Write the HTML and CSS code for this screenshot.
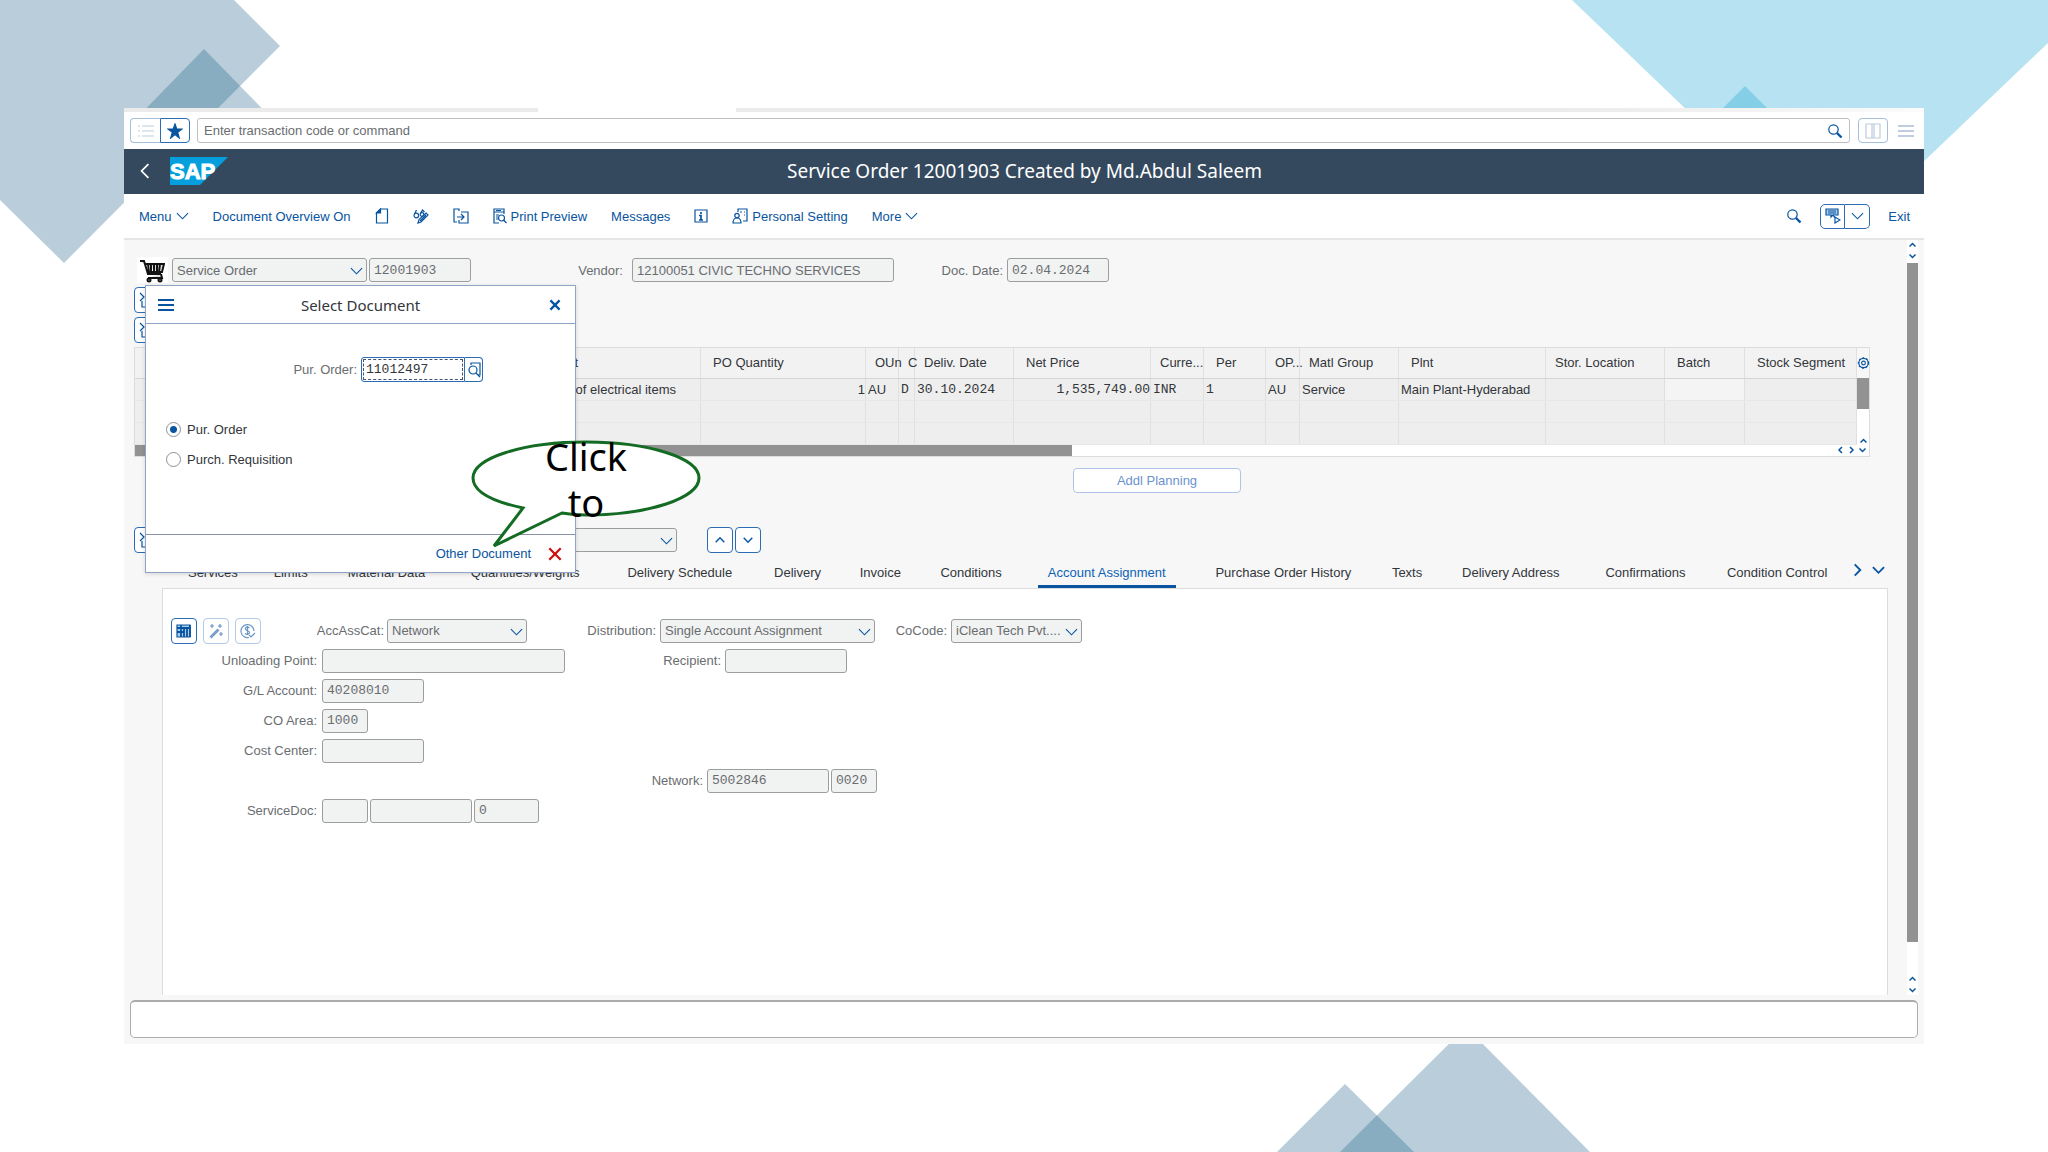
FILE: index.html
```html
<!DOCTYPE html>
<html lang="en">
<head>
  <meta charset="UTF-8">
  <meta name="viewport" content="width=device-width, initial-scale=1.0">
  <title>Service Order 12001903</title>
  <link rel="stylesheet" href="styles.css">
</head>
<body>

  <!-- Shared icons -->
  <svg class="sprite" aria-hidden="true">
    <symbol id="down" viewBox="0 0 14 14"><path d="M1 4l6 6 6-6"/></symbol>
    <symbol id="up" viewBox="0 0 14 14"><path d="M1 10l6-6 6 6"/></symbol>
    <symbol id="left" viewBox="0 0 14 14"><path d="M10 1L4 7l6 6"/></symbol>
    <symbol id="right" viewBox="0 0 14 14"><path d="M4 1l6 6-6 6"/></symbol>
    <symbol id="search" viewBox="0 0 16 16"><circle cx="6.500" cy="6.500" r="4.700"/><path d="M10 10l4.500 4.500" stroke-width="2.400"/></symbol>
    <symbol id="bars" viewBox="0 0 16 14"><path d="M0 2h16M0 7h16M0 12h16"/></symbol>
    <symbol id="cross" viewBox="0 0 14 14"><path d="M3 3l8 8M11 3l-8 8"/></symbol>
    <symbol id="cancel" viewBox="0 0 14 14"><path d="M2 2l10 10M12 2L2 12"/></symbol>
    <symbol id="detail" viewBox="0 0 16 16"><path d="M1 1l4 4-4 4M3 9v6h11V3H8"/></symbol>
  </svg>

  <!-- Slide decoration -->
  <svg class="deco deco-left" viewBox="0 0 290 270"><path d="M0 0h234l46 46L64 263 0 200z"/><path d="M204 49l76 78H128z"/></svg>
  <svg class="deco deco-right" viewBox="0 0 480 250"><path d="M4 0h476v43L264 249z"/><path d="M177 86l40 40h-80z"/></svg>
  <svg class="deco deco-bottom" viewBox="0 0 320 130"><path d="M196 5l124 125H70z"/><path d="M75 62l69 68H7z"/></svg>

  <div class="window">
    <div class="strip"><span></span><span></span></div>

    <!-- Command bar -->
    <div class="command-bar">
      <div class="toggle">
        <button class="faded" aria-label="List"><svg class="icon" viewBox="0 0 16 14"><path d="M0 2h2M4 2h12M0 7h2M4 7h12M0 12h2M4 12h12"/></svg></button>
        <button class="active" aria-label="Favorites"><svg class="icon solid" viewBox="0 0 16 16"><path d="M8 1l1.700 5H15l-4.300 3.300L12.300 15 8 11.500 3.700 15l1.600-5.700L1 6h5.300z"/></svg></button>
      </div>
      <div class="command">
        <input type="text" placeholder="Enter transaction code or command" aria-label="Transaction code">
        <svg class="icon"><use href="#search"/></svg>
      </div>
      <button class="split-view faded" aria-label="Split view"><svg class="icon" viewBox="0 0 16 16"><path d="M1 1h14v14H1zM7 1v14M9 1v14"/></svg></button>
      <button class="bare burger" aria-label="Menu"><svg class="icon"><use href="#bars"/></svg></button>
    </div>

    <!-- Header -->
    <header class="header">
      <button class="bare back" aria-label="Back"><svg class="icon"><use href="#left"/></svg></button>
      <svg class="logo" viewBox="0 0 58 28"><path d="M0 0h58L30 28H0z"/><text x="0" y="22">SAP</text></svg>
      <h1>Service Order 12001903 Created by Md.Abdul Saleem</h1>
    </header>

    <!-- Toolbar -->
    <nav class="toolbar">
      <button class="bare">Menu <svg class="icon small"><use href="#down"/></svg></button>
      <button class="bare">Document Overview On</button>
      <button class="bare" aria-label="Create"><svg class="icon narrow" viewBox="0 0 13 16"><path d="M5 1h7v14H1V5z"/><path class="fill" d="M5 1v4H1z"/></svg></button>
      <button class="bare" aria-label="Display/Change"><svg class="icon" viewBox="0 0 16 16"><circle cx="3.300" cy="7.500" r="2.300"/><circle cx="9" cy="6.500" r="1.800"/><path d="M1.500 6l2-4M7.500 5.500l2-3.500 2 2M5 15l1-3.500 7-6.500 2 2-7 7zM7 13l6-6"/></svg></button>
      <button class="bare" aria-label="Other Order"><svg class="icon" viewBox="0 0 16 16"><path d="M6 3V1H1v13h3M8 4h7v11H6v-3M4 9h7M8 6l3 3-3 3"/></svg></button>
      <button class="bare"><svg class="icon narrow" viewBox="0 0 14 16"><path d="M6 15H1V1h10v5M1 4h10M3 2.500h5M3 7h3M3 9h2M3 11h2"/><circle cx="8.500" cy="10" r="3"/><path d="M10.500 12l3 3"/></svg>Print Preview</button>
      <button class="bare">Messages</button>
      <button class="bare" aria-label="Info"><svg class="icon narrow" viewBox="0 0 14 14"><path d="M1 1h12v12H1z"/><path d="M7 3v2M5 6.500h2V11M5 11h4" stroke-width="1.700"/></svg></button>
      <button class="bare"><svg class="icon" viewBox="0 0 16 16"><path d="M6 4V1h9v12h-4M8 4h2M12 4h1M12 7h1M1 15c0-3 1-5 4-5s4 2 4 5z"/><circle cx="5" cy="7.500" r="2.200"/></svg>Personal Setting</button>
      <button class="bare">More <svg class="icon small"><use href="#down"/></svg></button>
      <span class="spacer"></span>
      <button class="bare" aria-label="Search"><svg class="icon"><use href="#search"/></svg></button>
      <div class="split-button">
        <button aria-label="Services"><svg class="icon" viewBox="0 0 16 16"><path class="tint" d="M1 1h12v6H8l-2 2V7H1z"/><path d="M3 3h8M3 5h8M8 7l2 3M10 9v6l5-3z"/></svg></button>
        <button aria-label="More services"><svg class="icon small"><use href="#down"/></svg></button>
      </div>
      <button class="bare">Exit</button>
    </nav>

    <div class="body">
      <main class="content">

        <!-- Document header -->
        <div class="doc-row">
          <span class="cart"><svg viewBox="0 0 26 24"><path d="M1 2h4l4 13h13M6 5h19l-2 8H8M9 5l1 8M12 5v8M15 5v8M18 5v8M21 5l-1 8M22 15l1 4H9"/><circle cx="10" cy="21" r="1.500"/><circle cx="21" cy="21" r="1.500"/></svg></span>
          <span class="select w-195"><select aria-label="Document type"><option>Service Order</option></select><svg class="icon small"><use href="#down"/></svg></span>
          <input class="mono w-102" value="12001903" readonly aria-label="Document number">
          <label class="vendor" for="vendor">Vendor:</label>
          <input class="w-262" id="vendor" value="12100051 CIVIC TECHNO SERVICES" readonly>
          <label class="date" for="date">Doc. Date:</label>
          <input class="mono w-102" id="date" value="02.04.2024" readonly>
        </div>
        <div class="side">
          <button class="tool" aria-label="Header"><svg class="icon"><use href="#detail"/></svg></button>
          <button class="tool" aria-label="Item overview"><svg class="icon"><use href="#detail"/></svg></button>
        </div>

        <!-- Items -->
        <div class="items">
          <table>
            <colgroup>
              <col><col class="c-qty"><col class="c-oun"><col class="c-cat"><col class="c-date"><col class="c-price"><col class="c-cur"><col class="c-per"><col class="c-opu"><col class="c-matl"><col class="c-plnt"><col class="c-stor"><col class="c-batch"><col class="c-stock">
            </colgroup>
            <thead>
              <tr><th class="short">Short Text</th><th class="wide">PO Quantity</th><th>OUn</th><th>C</th><th>Deliv. Date</th><th class="wide">Net Price</th><th>Curre...</th><th class="wide">Per</th><th>OP...</th><th>Matl Group</th><th class="wide">Plnt</th><th>Stor. Location</th><th class="wide">Batch</th><th class="wide">Stock Segment</th></tr>
            </thead>
            <tbody>
              <tr><td class="item">Supply of electrical items</td><td class="num">1</td><td>AU</td><td class="mono">D</td><td class="mono">30.10.2024</td><td class="mono num">1,535,749.00</td><td class="mono">INR</td><td class="mono">1</td><td>AU</td><td>Service</td><td>Main Plant-Hyderabad</td><td></td><td class="open"></td><td></td></tr>
              <tr><td></td><td></td><td></td><td></td><td></td><td></td><td></td><td></td><td></td><td></td><td></td><td></td><td></td><td></td></tr>
              <tr><td></td><td></td><td></td><td></td><td></td><td></td><td></td><td></td><td></td><td></td><td></td><td></td><td></td><td></td></tr>
            </tbody>
          </table>
          <div class="items-side">
            <button class="bare gear" aria-label="Settings"><svg class="icon small" viewBox="0 0 14 14"><circle cx="7" cy="7" r="5"/><circle cx="7" cy="7" r="5.500" stroke-dasharray="2 2"/><circle cx="7" cy="7" r="2"/></svg></button>
            <div class="track"><span class="thumb"></span><svg class="icon tiny"><use href="#up"/></svg></div>
          </div>
          <div class="hscroll"><span class="thumb"></span><svg class="icon tiny"><use href="#left"/></svg><svg class="icon tiny"><use href="#right"/></svg></div>
          <div class="corner"><svg class="icon tiny"><use href="#down"/></svg></div>
        </div>

        <div class="planning"><button>Addl Planning</button></div>

        <div class="item-row">
          <button class="tool" aria-label="Item details"><svg class="icon"><use href="#detail"/></svg></button>
          <span class="select item-select"><select aria-label="Item"><option></option></select><svg class="icon small"><use href="#down"/></svg></span>
          <button class="tool" aria-label="Previous item"><svg class="icon step"><use href="#up"/></svg></button>
          <button class="tool" aria-label="Next item"><svg class="icon step"><use href="#down"/></svg></button>
        </div>

        <!-- Tabs -->
        <div class="tabs">
          <button>Services</button>
          <button>Limits</button>
          <button>Material Data</button>
          <button>Quantities/Weights</button>
          <button>Delivery Schedule</button>
          <button>Delivery</button>
          <button>Invoice</button>
          <button>Conditions</button>
          <button class="current">Account Assignment</button>
          <button>Purchase Order History</button>
          <button>Texts</button>
          <button>Delivery Address</button>
          <button>Confirmations</button>
          <button>Condition Control</button>
          <span class="tab-nav"><svg class="icon small"><use href="#right"/></svg><svg class="icon small"><use href="#down"/></svg></span>
        </div>

        <section class="panel">
          <div class="form-row">
            <div class="left">
              <div class="panel-tools">
                <button class="tool" aria-label="Table view"><svg class="icon" viewBox="0 0 16 16"><path class="tint" d="M1 2h13v12H1z"/><path d="M1 5h13M1 9h7M5 2v12M8 5v9M11 5v9M14 2v12" stroke-width="1.800"/></svg></button>
                <button class="tool dim" aria-label="Change distribution"><svg class="icon" viewBox="0 0 16 16"><path d="M2 14l8-8M3 15l8-8M4 1v4M2 3h4M12 1v4M10 3h4M13 9v4M11 11h4"/></svg></button>
                <button class="tool dim" aria-label="Repeat"><svg class="icon" viewBox="0 0 16 16"><path d="M9 14.500A6.500 6.500 0 1 1 14 8M9.500 5C8 3.500 5 4 5.500 6s4 1.500 4 3.500-3 2.500-4.500 1M7.500 3v9M9 12l2 2 4-4"/></svg></button>
              </div>
              <label class="l-cat" for="cat">AccAssCat:</label>
              <span class="select w-140"><select id="cat"><option>Network</option></select><svg class="icon small"><use href="#down"/></svg></span>
            </div>
            <label class="l-dist" for="dist">Distribution:</label>
            <span class="select w-215"><select id="dist"><option>Single Account Assignment</option></select><svg class="icon small"><use href="#down"/></svg></span>
            <label class="l-code" for="code">CoCode:</label>
            <span class="select w-131"><select id="code"><option>iClean Tech Pvt....</option></select><svg class="icon small"><use href="#down"/></svg></span>
          </div>
          <div class="form-row">
            <div class="left"><label for="unload">Unloading Point:</label><input class="w-243" id="unload" readonly></div>
            <label class="l-recip" for="recip">Recipient:</label><input class="w-122" id="recip" readonly>
          </div>
          <div class="form-row">
            <div class="left"><label for="gl">G/L Account:</label><input class="mono w-102" id="gl" value="40208010" readonly></div>
          </div>
          <div class="form-row">
            <div class="left"><label for="area">CO Area:</label><input class="mono w-46" id="area" value="1000" readonly></div>
          </div>
          <div class="form-row">
            <div class="left"><label for="cost">Cost Center:</label><input class="mono w-102" id="cost" readonly></div>
          </div>
          <div class="form-row">
            <div class="left"></div>
            <label class="l-net" for="net">Network:</label><input class="mono w-122" id="net" value="5002846" readonly><input class="mono w-46" value="0020" readonly aria-label="Activity">
          </div>
          <div class="form-row">
            <div class="left"><label for="sdoc">ServiceDoc:</label><input class="mono w-46" id="sdoc" readonly><input class="mono w-102" readonly aria-label="Service document number"><input class="mono w-65" value="0" readonly aria-label="Service document item"></div>
          </div>
        </section>
      </main>

      <div class="vscroll">
        <svg class="icon tiny"><use href="#up"/></svg>
        <svg class="icon tiny"><use href="#down"/></svg>
        <span class="thumb"></span>
        <svg class="icon tiny"><use href="#up"/></svg>
        <svg class="icon tiny"><use href="#down"/></svg>
      </div>
    </div>

    <footer class="status"><div></div></footer>

    <!-- Select Document dialog -->
    <div class="dialog" role="dialog" aria-labelledby="dialog-title">
      <div class="dialog-head">
        <button class="bare" aria-label="Dialog menu"><svg class="icon"><use href="#bars"/></svg></button>
        <h2 id="dialog-title">Select Document</h2>
        <button class="bare" aria-label="Close"><svg class="icon"><use href="#cross"/></svg></button>
      </div>
      <div class="dialog-body">
        <div class="lookup">
          <label for="po">Pur. Order:</label>
          <input class="mono" id="po" value="11012497">
          <button aria-label="Value help"><svg class="icon" viewBox="0 0 16 16"><path d="M5 3V1h9v12h-2"/><circle cx="7" cy="8" r="4"/><path d="M10 11l4 4"/></svg></button>
        </div>
        <div class="choices">
          <label><input type="radio" name="kind" checked> Pur. Order</label>
          <label><input type="radio" name="kind"> Purch. Requisition</label>
        </div>
      </div>
      <div class="dialog-foot">
        <button class="bare">Other Document</button>
        <button class="bare cancel" aria-label="Cancel"><svg class="icon"><use href="#cancel"/></svg></button>
      </div>
    </div>

    <div class="callout">
      <svg viewBox="0 0 232 110"><path d="M53 69C20 62 3 52 3 39 3 19 53 3 116 3s113 16 113 36-50 37-113 37q-13 0-24-2L24 107z"/></svg>
      <p>Click<br>to</p>
    </div>
  </div>

</body>
</html>
```
FILE: styles.css
```css
* {
  box-sizing: border-box;
}

body {
  margin: 0;
  min-height: 100vh;
  display: flex;
  position: relative;
  overflow: hidden;
  background: #ffffff;
  color: #32363a;
  font-family: "Liberation Sans", Arial, sans-serif;
  font-size: 13px;
}

h1, h2, p {
  margin: 0;
  font-weight: normal;
}

button, input, select {
  font: inherit;
  color: inherit;
  margin: 0;
}

button {
  display: flex;
  align-items: center;
  justify-content: center;
  padding: 0;
  background: #ffffff;
  border: 1px solid #2b6cb5;
  border-radius: 4px;
  color: #0854a0;
  white-space: nowrap;
}

button.bare {
  background: none;
  border: 0;
}

.sprite {
  position: absolute;
  width: 0;
  height: 0;
}

.icon {
  width: 16px;
  height: 16px;
  flex: none;
  fill: none;
  stroke: #0854a0;
  stroke-width: 1.2;
}
.icon.solid, .icon .fill {
  fill: #0854a0;
}
.icon .tint {
  fill: #a9cbea;
}
.icon.narrow {
  width: 14px;
}
.icon.small {
  width: 13px;
}
.icon.tiny {
  width: 7px;
  height: 8px;
  stroke-width: 3;
}

/* Slide decoration */
.deco {
  position: absolute;
  fill: rgba(30, 98, 134, 0.31);
}
.deco-left {
  top: 0;
  left: 0;
  width: 290px;
}
.deco-right {
  top: 0;
  right: 0;
  width: 480px;
  fill: rgba(18, 160, 210, 0.3);
}
.deco-bottom {
  bottom: 0;
  left: 62%;
  width: 320px;
}

.window {
  position: relative;
  flex: 1;
  display: flex;
  flex-direction: column;
  min-width: 0;
  margin: 108px 124px;
  background: #f7f7f7;
}

.strip {
  display: flex;
  justify-content: space-between;
  height: 4px;
  background: #ffffff;
}
.strip span {
  width: 23%;
  background: #ebebeb;
}
.strip span + span {
  width: 66%;
  background: linear-gradient(to right, #ebebeb 70%, #fbfbfb);
}

/* Command bar */
.command-bar {
  display: flex;
  align-items: center;
  height: 37px;
  padding: 0 8px 0 6px;
  background: #ffffff;
}
.command-bar button {
  width: 30px;
  height: 25px;
}
.toggle {
  display: flex;
  margin-right: 7px;
}
.command-bar .faded {
  border-color: #a4c0dd;
}
.faded .icon {
  stroke: #bccbdc;
}
.toggle .faded {
  border-radius: 4px 0 0 4px;
  border-right: 0;
}
.toggle .active {
  border-radius: 0 4px 4px 0;
}
.command {
  flex: 1;
  display: flex;
  align-items: center;
  height: 25px;
  padding: 0 6px;
  border: 1px solid #bfbfbf;
  border-radius: 3px;
}
.command input {
  flex: 1;
  padding: 0;
  border: 0;
  background: none;
  outline: none;
}
.command input::placeholder {
  color: #6a6d70;
  opacity: 1;
}
.split-view {
  margin-left: 8px;
}
.command-bar .burger {
  width: 16px;
  margin: 0 2px 0 10px;
}
.burger .icon {
  stroke: #7f9dbf;
}

/* Header */
.header {
  display: flex;
  align-items: center;
  height: 45px;
  padding: 0 13px 2px;
  background: #34495e;
}
.back .icon {
  stroke: #ffffff;
  stroke-width: 1.5;
}
.logo {
  width: 58px;
  height: 28px;
  margin-left: 17px;
  fill: #049fdc;
}
.logo text {
  fill: #ffffff;
  stroke: #ffffff;
  font-size: 22px;
  font-weight: bold;
}
.header h1 {
  flex: 1;
  padding-right: 90px;
  color: #ffffff;
  font-family: "Noto Sans", sans-serif;
  font-size: 19px;
  text-align: center;
}

/* Toolbar */
.toolbar {
  display: flex;
  align-items: center;
  gap: 24px;
  height: 46px;
  padding: 0 14px 0 15px;
  background: #ffffff;
  border-bottom: 2px solid #e5e5e5;
}
.toolbar button {
  gap: 4px;
}
.spacer {
  flex: 1;
}
.split-button {
  display: flex;
  margin: 0 -6px;
}
.split-button button {
  width: 25px;
  height: 25px;
  border-radius: 5px 0 0 5px;
}
.split-button button + button {
  border-left: 0;
  border-radius: 0 5px 5px 0;
}

/* Work area */
.body {
  flex: 1;
  display: flex;
  min-height: 0;
}
.content {
  flex: 1;
  display: flex;
  flex-direction: column;
  min-width: 0;
  padding: 17px 19px 0 10px;
}

.content input, .select select {
  height: 24px;
  padding: 0 4px;
  background: #f1f2f2;
  border: 1px solid #9b9d9f;
  border-radius: 3px;
  color: #6a6d70;
  outline: none;
}
.select {
  position: relative;
  display: flex;
}
.select select {
  width: 100%;
  appearance: none;
}
.select .icon {
  position: absolute;
  right: 4px;
  top: 5px;
  pointer-events: none;
}
.content label {
  color: #6a6d70;
  text-align: right;
  white-space: nowrap;
}
.mono, .content input.mono {
  font-family: "Liberation Mono", monospace;
}

.w-46 { width: 46px; }
.w-65 { width: 65px; }
.w-102 { width: 102px; }
.w-122 { width: 122px; }
.w-131 { width: 131px; }
.w-140 { width: 140px; }
.w-195 { width: 195px; }
.w-215 { width: 215px; }
.w-243 { width: 243px; }
.w-262 { width: 262px; }

.doc-row {
  display: flex;
  align-items: center;
  gap: 2px;
}
.cart {
  width: 31px;
  height: 26px;
  margin: 0 2px 0 3px;
  padding: 2px;
  background: #ffffff;
}
.cart svg {
  width: 26px;
  height: 24px;
  fill: #111111;
  fill-opacity: 0.15;
  stroke: #111111;
  stroke-width: 2;
}
.doc-row .vendor {
  width: 157px;
  padding-right: 7px;
}
.doc-row .date {
  width: 109px;
  padding-right: 2px;
}

.tool {
  width: 26px;
  height: 26px;
}
.tool.dim {
  border-color: #b5cae3;
}
.dim .icon {
  stroke: #6c96c8;
}
.side {
  display: flex;
  flex-direction: column;
  gap: 4px;
  margin-top: 4px;
}

/* Items table */
.items {
  display: grid;
  grid-template-columns: 1fr 12px;
  margin: 4px 18px 0 0;
  border: 1px solid #dcdcdc;
}
.items table {
  width: 100%;
  table-layout: fixed;
  border-collapse: collapse;
  background: #eeeeee;
}
.items th, .items td {
  padding: 0 2px;
  border-right: 1px solid #e0e0e0;
  text-align: left;
  font-weight: normal;
  white-space: nowrap;
}
.items th {
  height: 30px;
  padding: 0 0 0 9px;
  background: #f2f2f2;
  border-bottom: 1px solid #d5d5d5;
}
.items th.wide {
  padding-left: 12px;
}
.items td {
  height: 22px;
  border-bottom: 1px solid #e7e7e7;
}
.items .num {
  padding-right: 0;
  text-align: right;
}
.items th.short {
  padding-right: 122px;
  text-align: right;
}
.items .item {
  padding-right: 24px;
  text-align: right;
}
.items .open {
  background: #f4f4f4;
}
.c-qty { width: 165px; }
.c-oun { width: 33px; }
.c-cat { width: 16px; }
.c-date { width: 99px; }
.c-price { width: 137px; }
.c-cur { width: 53px; }
.c-per { width: 62px; }
.c-opu { width: 34px; }
.c-matl { width: 99px; }
.c-plnt { width: 147px; }
.c-stor { width: 119px; }
.c-batch { width: 80px; }
.c-stock { width: 112px; }

.thumb {
  background: #929292;
}
.items-side {
  display: flex;
  flex-direction: column;
}
.gear {
  height: 30px;
  border-radius: 0;
}
.track {
  flex: 1;
  display: flex;
  flex-direction: column;
  align-items: center;
  justify-content: space-between;
  background: #ffffff;
}
.track .thumb {
  width: 100%;
  height: 31px;
}
.hscroll, .corner {
  display: flex;
  align-items: center;
  gap: 4px;
  height: 11px;
  padding-right: 2px;
  background: #ffffff;
}
.corner {
  padding-left: 2px;
}
.hscroll .thumb {
  width: 937px;
  height: 11px;
  margin-right: auto;
}

.planning {
  display: flex;
  margin-top: 11px;
  padding-left: 939px;
}
.planning button {
  width: 168px;
  height: 25px;
  border-color: #b1c3e6;
  color: #6c93cd;
}
.item-row {
  display: flex;
  align-items: center;
  gap: 2px;
  margin-top: 34px;
}
.item-select {
  width: 505px;
  margin: 0 28px 0 10px;
}
.icon.step {
  width: 10px;
  stroke-width: 2;
}

/* Tabs and panel */
.tabs {
  display: grid;
  grid-template-columns: 78fr 78fr 114fr 164fr 146fr 90fr 76fr 106fr 166fr 188fr 60fr 148fr 122fr 142fr 40px;
  justify-items: center;
  height: 35px;
  padding-left: 40px;
}
.tabs button {
  min-width: 0;
  padding: 8px 10px 0;
  background: none;
  border: 0;
  border-bottom: 3px solid transparent;
  border-radius: 0;
  color: #32363a;
}
.tabs .current {
  border-color: #0854a0;
  color: #0a62b8;
}
.tab-nav {
  display: flex;
  align-items: center;
  gap: 8px;
}
.tab-nav .icon {
  stroke-width: 2;
}
.panel {
  flex: 1;
  display: flex;
  flex-direction: column;
  gap: 6px;
  margin-left: 28px;
  padding: 30px 8px 0;
  background: #ffffff;
  border: 1px solid #dcdcdc;
  border-bottom: 0;
}
.form-row, .left {
  display: flex;
  align-items: center;
  gap: 2px;
  height: 24px;
}
.left {
  width: 407px;
}
.left label {
  width: 149px;
  padding-right: 3px;
}
.panel-tools {
  display: flex;
  gap: 6px;
}
.left .l-cat {
  width: 122px;
  padding-right: 1px;
}
.form-row > label {
  padding-right: 2px;
}
.l-dist { width: 78px; }
.l-code { width: 72px; }
.l-recip { width: 143px; }
.l-net { width: 125px; }

/* Main scrollbar */
.vscroll {
  display: flex;
  flex-direction: column;
  align-items: center;
  gap: 3px;
  width: 11px;
  margin-right: 6px;
  padding: 1px 0;
  background: #ffffff;
}
.vscroll .thumb {
  flex: 1;
  width: 11px;
  margin-bottom: 30px;
}

.status {
  padding: 5px 6px 6px;
}
.status div {
  height: 38px;
  background: #ffffff;
  border: 1px solid #acacac;
  border-top-width: 2px;
  border-radius: 5px;
}

/* Dialog */
.dialog {
  position: absolute;
  top: 177px;
  left: 21px;
  display: flex;
  flex-direction: column;
  width: 431px;
  height: 288px;
  background: #ffffff;
  border: 1px solid #8fa5c6;
  box-shadow: 0 1px 4px rgba(0, 0, 0, 0.15);
}
.dialog-head {
  display: flex;
  align-items: center;
  height: 38px;
  padding: 1px 12px 0;
  border-bottom: 1px solid #8fa5c6;
}
.dialog-head h2 {
  flex: 1;
  font-family: "Noto Sans", sans-serif;
  font-size: 15px;
  text-align: center;
}
.dialog-head .icon {
  stroke-width: 2;
}
.dialog-body {
  flex: 1;
}
.lookup {
  display: flex;
  align-items: center;
  margin-top: 33px;
}
.lookup label {
  width: 215px;
  padding-right: 4px;
  color: #6a6d70;
  text-align: right;
}
.lookup input {
  width: 104px;
  height: 25px;
  padding: 0 4px;
  border: 1px solid #2b6cb5;
  border-radius: 3px 0 0 3px;
  outline: 1px dashed #44546a;
  outline-offset: -3px;
}
.lookup button {
  width: 18px;
  height: 25px;
  border-left: 0;
  border-radius: 0 4px 4px 0;
}
.choices {
  display: flex;
  flex-direction: column;
  gap: 14px;
  margin: 39px 0 0 20px;
}
.choices label {
  display: flex;
  align-items: center;
  gap: 6px;
  height: 16px;
}
.choices input {
  appearance: none;
  width: 15px;
  height: 15px;
  border: 1px solid #89919a;
  border-radius: 50%;
}
.choices input:checked {
  background: radial-gradient(#0854a0 3px, #ffffff 4px);
}
.dialog-foot {
  display: flex;
  align-items: center;
  justify-content: flex-end;
  gap: 16px;
  height: 38px;
  padding-right: 12px;
  border-top: 1px solid #8a92a8;
}
.cancel .icon {
  stroke: #cc1010;
  stroke-width: 2;
}

/* Callout */
.callout {
  position: absolute;
  top: 331px;
  left: 346px;
  width: 232px;
}
.callout svg {
  display: block;
  fill: #ffffff;
  stroke: #146b24;
  stroke-width: 3;
}
.callout p {
  position: absolute;
  top: -6px;
  left: 0;
  width: 100%;
  color: #000000;
  font-family: "Noto Sans", sans-serif;
  font-size: 38px;
  line-height: 46px;
  text-align: center;
}
```
